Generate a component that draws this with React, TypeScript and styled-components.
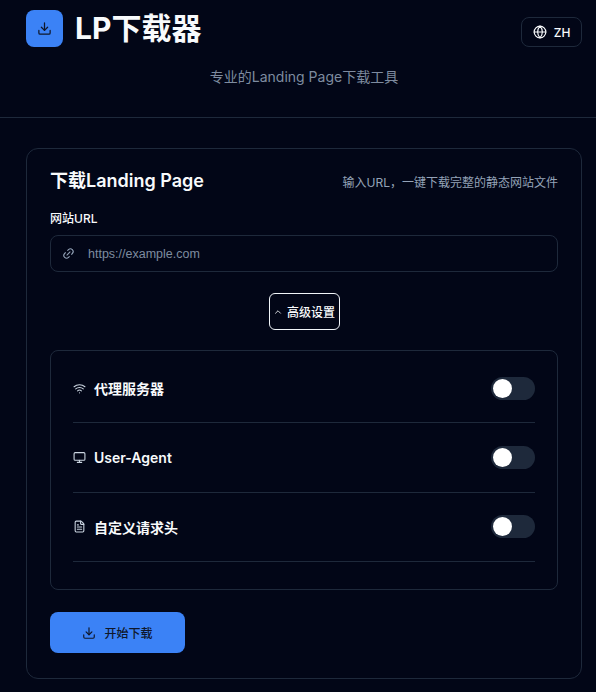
import React from "react";
import styled, { createGlobalStyle } from "styled-components";
import { ChevronUp, Download, FileText, Globe, Link2, Monitor, Wifi } from "lucide-react";

const Global = createGlobalStyle`
  html, body { margin: 0; padding: 0; background: #020617; }
  body { font-family: Inter, "Noto Sans CJK SC", sans-serif; color: #f8fafc; }
  * { box-sizing: border-box; }
`;

const Page = styled.div`
  width: 596px;
  height: 692px;
  overflow: hidden;
  background: #020617;
`;
const Header = styled.header`
  height: 118px;
  padding: 10px 14px 0 26px;
  border-bottom: 1px solid #1e293b;
`;
const TopRow = styled.div`
  display: flex;
  justify-content: space-between;
  align-items: flex-end;
  height: 37px;
`;
const Brand = styled.div`
  display: flex;
  align-items: center;
  gap: 12px;
`;
const LogoBox = styled.div`
  width: 37px;
  height: 37px;
  border-radius: 8px;
  background: #3b82f6;
  color: #0f172a;
  display: flex;
  align-items: center;
  justify-content: center;
`;
const Title = styled.h1`
  margin: 0;
  font-size: 30px;
  line-height: 37px;
  font-weight: 700;
  color: #f8fafc;
`;
const LangButton = styled.button`
  width: 61px;
  height: 30px;
  padding: 0;
  display: flex;
  align-items: center;
  justify-content: center;
  gap: 7px;
  border: 1px solid #1e293b;
  border-radius: 8px;
  background: #020617;
  color: #f8fafc;
  font: 500 12px Inter, sans-serif;
`;
const Subtitle = styled.p`
  margin: 20px 0 0;
  text-align: center;
  font-size: 14px;
  line-height: 20px;
  color: #94a3b8;
  opacity: 0.85;
`;
const Main = styled.main`
  padding: 30px 14px 0 26px;
`;
const Card = styled.section`
  height: 531px;
  padding: 20px 23px;
  border: 1px solid #1e293b;
  border-radius: 12px;
  background: #020617;
`;
const CardHead = styled.div`
  display: flex;
  justify-content: space-between;
  align-items: center;
  height: 24px;
`;
const CardTitle = styled.h2`
  margin: 0;
  font-size: 18px;
  line-height: 24px;
  font-weight: 600;
`;
const CardHint = styled.span`
  font-size: 12px;
  color: #94a3b8;
`;
const FieldLabel = styled.label`
  display: block;
  margin-top: 18px;
  font-size: 12px;
  line-height: 16px;
  font-weight: 500;
`;
const InputWrap = styled.div`
  margin-top: 8px;
  height: 37px;
  padding-left: 11px;
  display: flex;
  align-items: center;
  gap: 13px;
  border: 1px solid #1e293b;
  border-radius: 8px;
  color: #94a3b8;
`;
const UrlText = styled.span`
  font: 12px "Liberation Sans", Arial, sans-serif;
  font-size: 12.5px;
  color: #94a3b8;
  opacity: 0.85;
`;
const ToggleRow = styled.div`
  display: flex;
  justify-content: center;
  margin-top: 21px;
`;
const AdvancedButton = styled.button`
  width: 71px;
  height: 37px;
  padding: 0;
  display: flex;
  align-items: center;
  justify-content: center;
  gap: 4px;
  border: 1px solid #f1f5f9;
  border-radius: 6px;
  background: #020617;
  color: #f8fafc;
  font: 500 12px Inter, "Noto Sans CJK SC", sans-serif;
`;
const Panel = styled.div`
  height: 240px;
  margin-top: 20px;
  padding: 3px 22px 0;
  border: 1px solid #1e293b;
  border-radius: 8px;
`;
const Row = styled.div`
  height: 69.3px;
  display: flex;
  align-items: center;
  justify-content: space-between;
  border-bottom: 1px solid #1e293b;
`;
const RowLabel = styled.div`
  display: flex;
  align-items: center;
  gap: 8px;
  font-size: 14px;
  font-weight: 600;
  color: #f8fafc;
`;
const IconSlot = styled.span`
  display: flex;
  color: #cbd5e1;
`;
const Track = styled.div`
  width: 44px;
  height: 23px;
  padding: 2px;
  border-radius: 12px;
  background: #1e293b;
`;
const Knob = styled.div`
  width: 19px;
  height: 19px;
  border-radius: 50%;
  background: #fff;
`;
const StartButton = styled.button`
  margin-top: 22px;
  width: 135px;
  height: 41px;
  padding: 0;
  display: flex;
  align-items: center;
  justify-content: center;
  gap: 8px;
  border: none;
  border-radius: 8px;
  background: #3b82f6;
  color: #0f172a;
  font: 500 12px Inter, "Noto Sans CJK SC", sans-serif;
`;

const rows = [
  { icon: Wifi, label: "代理服务器" },
  { icon: Monitor, label: "User-Agent" },
  { icon: FileText, label: "自定义请求头" },
];

export default function App() {
  return (
    <Page>
      <Global />
      <Header>
        <TopRow>
          <Brand>
            <LogoBox><Download size={15} strokeWidth={2} /></LogoBox>
            <Title>LP下载器</Title>
          </Brand>
          <LangButton><Globe size={14} strokeWidth={2} />ZH</LangButton>
        </TopRow>
        <Subtitle>专业的Landing Page下载工具</Subtitle>
      </Header>
      <Main>
        <Card>
          <CardHead>
            <CardTitle>下载Landing Page</CardTitle>
            <CardHint>输入URL，一键下载完整的静态网站文件</CardHint>
          </CardHead>
          <FieldLabel>网站URL</FieldLabel>
          <InputWrap>
            <Link2 size={13} strokeWidth={2} style={{ transform: "rotate(-45deg)" }} />
            <UrlText>https://example.com</UrlText>
          </InputWrap>
          <ToggleRow>
            <AdvancedButton><ChevronUp size={10} strokeWidth={2} />高级设置</AdvancedButton>
          </ToggleRow>
          <Panel>
            {rows.map(({ icon: Icon, label }) => (
              <Row key={label}>
                <RowLabel>
                  <IconSlot><Icon size={13} strokeWidth={2} /></IconSlot>
                  {label}
                </RowLabel>
                <Track><Knob /></Track>
              </Row>
            ))}
          </Panel>
          <StartButton><Download size={14} strokeWidth={2} />开始下载</StartButton>
        </Card>
      </Main>
    </Page>
  );
}
